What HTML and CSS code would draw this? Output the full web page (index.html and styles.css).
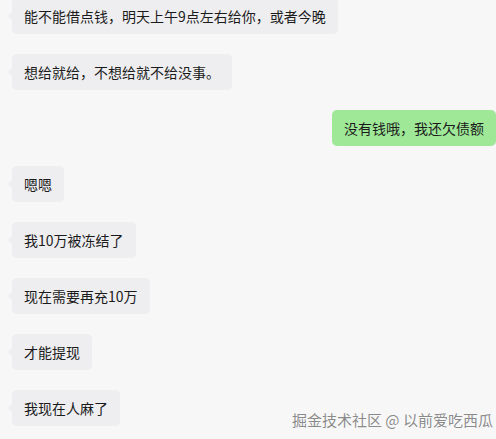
FILE: index.html
```html
<!DOCTYPE html>
<html lang="zh-CN">

<head>
    <meta charset="UTF-8">
    <meta name="viewport" content="width=device-width, initial-scale=1.0">
    <title>聊天记录</title>
    <link rel="stylesheet" href="styles.css">
</head>

<body>

    <div class="chat">
        <div class="row"><div class="bubble left">能不能借点钱，明天上午9点左右给你，或者今晚</div></div>
        <div class="row"><div class="bubble left">想给就给，不想给就不给没事。</div></div>
        <div class="row mine"><div class="bubble right">没有钱哦，我还欠债额</div></div>
        <div class="row"><div class="bubble left">嗯嗯</div></div>
        <div class="row"><div class="bubble left">我10万被冻结了</div></div>
        <div class="row"><div class="bubble left">现在需要再充10万</div></div>
        <div class="row"><div class="bubble left">才能提现</div></div>
        <div class="row"><div class="bubble left">我现在人麻了</div></div>
    </div>

    <div class="watermark">掘金技术社区 @ 以前爱吃西瓜</div>

</body>

</html>
```

FILE: styles.css
```css
* {
    margin: 0;
    padding: 0;
    box-sizing: border-box;
}

html,
body {
    height: 100%;
    overflow: hidden;
}

body {
    position: relative;
    background-color: #f7f7f8;
    font-family: "Noto Sans CJK SC", "Liberation Sans", sans-serif;
    color: #1b1b1b;
}

.chat {
    display: flex;
    flex-direction: column;
    gap: 20px;
    margin-top: -2px;
    padding: 0 1px 0 12px;
}

.row {
    display: flex;
}

.row.mine {
    justify-content: flex-end;
}

.bubble {
    position: relative;
    height: 36px;
    padding: 8px 12px;
    font-size: 14px;
    line-height: 20px;
    border-radius: 5px;
    white-space: nowrap;
}

.bubble.left {
    background-color: #eeeef0;
}

.bubble.left::before {
    content: "";
    position: absolute;
    left: -4px;
    top: 14px;
    border-top: 4px solid transparent;
    border-bottom: 4px solid transparent;
    border-right: 4px solid #eeeef0;
}

.bubble.right {
    background-color: #9fe898;
    margin-right: -1px;
}

.watermark {
    position: absolute;
    left: 292px;
    top: 410px;
    font-size: 15px;
    line-height: 20px;
    color: #8a8a8a;
    text-shadow: 0 0 1px #fff, 0 0 1px #fff;
}
```
